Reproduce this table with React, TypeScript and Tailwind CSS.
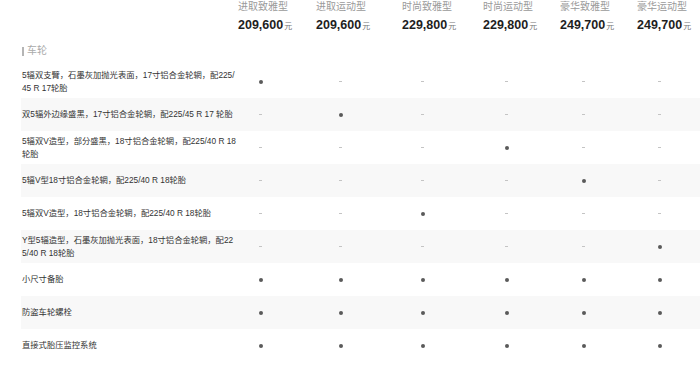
import React from "react";

const cols = [
  { name: "进取致雅型", price: "209,600", w: "w-[78px]", pl: "pl-[21px]" },
  { name: "进取运动型", price: "209,600", w: "w-[86px]", pl: "pl-[23px]" },
  { name: "时尚致雅型", price: "229,800", w: "w-[81px]", pl: "pl-[19px]" },
  { name: "时尚运动型", price: "229,800", w: "w-[77px]", pl: "pl-[22px]" },
  { name: "豪华致雅型", price: "249,700", w: "w-[77px]", pl: "pl-[22px]" },
  { name: "豪华运动型", price: "249,700", w: "w-[63px]", pl: "pl-[21px]" },
];

const rows: { lines: string[]; v: number[] }[] = [
  { lines: ["5辐双支臂，石墨灰加抛光表面，17寸铝合金轮辋，配225/", "45 R 17轮胎"], v: [1, 0, 0, 0, 0, 0] },
  { lines: ["双5辐外边缘盛黑，17寸铝合金轮辋，配225/45 R 17 轮胎"], v: [0, 1, 0, 0, 0, 0] },
  { lines: ["5辐双V造型，部分盛黑，18寸铝合金轮辋，配225/40 R 18", "轮胎"], v: [0, 0, 0, 1, 0, 0] },
  { lines: ["5辐V型18寸铝合金轮辋，配225/40 R 18轮胎"], v: [0, 0, 0, 0, 1, 0] },
  { lines: ["5辐双V造型，18寸铝合金轮辋，配225/40 R 18轮胎"], v: [0, 0, 1, 0, 0, 0] },
  { lines: ["Y型5辐造型，石墨灰加抛光表面，18寸铝合金轮辋，配22", "5/40 R 18轮胎"], v: [0, 0, 0, 0, 0, 1] },
  { lines: ["小尺寸备胎"], v: [1, 1, 1, 1, 1, 1] },
  { lines: ["防盗车轮螺栓"], v: [1, 1, 1, 1, 1, 1] },
  { lines: ["直接式胎压监控系统"], v: [1, 1, 1, 1, 1, 1] },
];

export default function App() {
  return (
    <div
      className="w-[700px] h-[371px] bg-white overflow-hidden"
      style={{ fontFamily: '"Liberation Sans", "Noto Sans CJK SC", sans-serif' }}
    >
      {/* header */}
      <div className="flex pl-[238px] pt-[1px]">
        {cols.map((c) => (
          <div key={c.name} className={`${c.w} shrink-0`}>
            <div className="text-[10px] leading-[12px] text-[#9a9a9a] whitespace-nowrap">{c.name}</div>
            <div className="mt-[4px] leading-[14px] whitespace-nowrap text-[#1e1e1e]">
              <span className="text-[12.5px] font-bold">{c.price}</span>
              <span className="text-[8px] text-[#777] ml-[1px]">元</span>
            </div>
          </div>
        ))}
      </div>

      {/* section title */}
      <div className="mt-[11px] ml-[22px] flex items-center h-[12px]">
        <span className="w-[2px] h-[9px] bg-[#b5b5b5]" />
        <span className="ml-[3px] text-[10px] leading-[12px] text-[#aaaaaa]">车轮</span>
      </div>

      {/* rows */}
      <div className="mt-[8px] ml-[21px]">
        {rows.map((r, i) => (
          <div
            key={i}
            className={`flex items-center h-[33px] ${i % 2 === 1 ? "bg-[#f8f8f8]" : "bg-white"}`}
          >
            <div className="w-[217px] shrink-0 pl-[1px] text-[8.3px] leading-[13px] text-[#333333] whitespace-nowrap">
              {r.lines.map((l, k) => (
                <div key={k}>{l}</div>
              ))}
            </div>
            {cols.map((c, j) => (
              <div key={j} className={`${c.w} ${c.pl} shrink-0 flex items-center`}>
                {r.v[j] ? (
                  <span className="block w-[4px] h-[4px] rounded-full bg-[#5a5a5a]" />
                ) : (
                  <span className="block w-[3px] h-[1px] bg-[#c4c4c4]" />
                )}
              </div>
            ))}
          </div>
        ))}
      </div>
    </div>
  );
}
